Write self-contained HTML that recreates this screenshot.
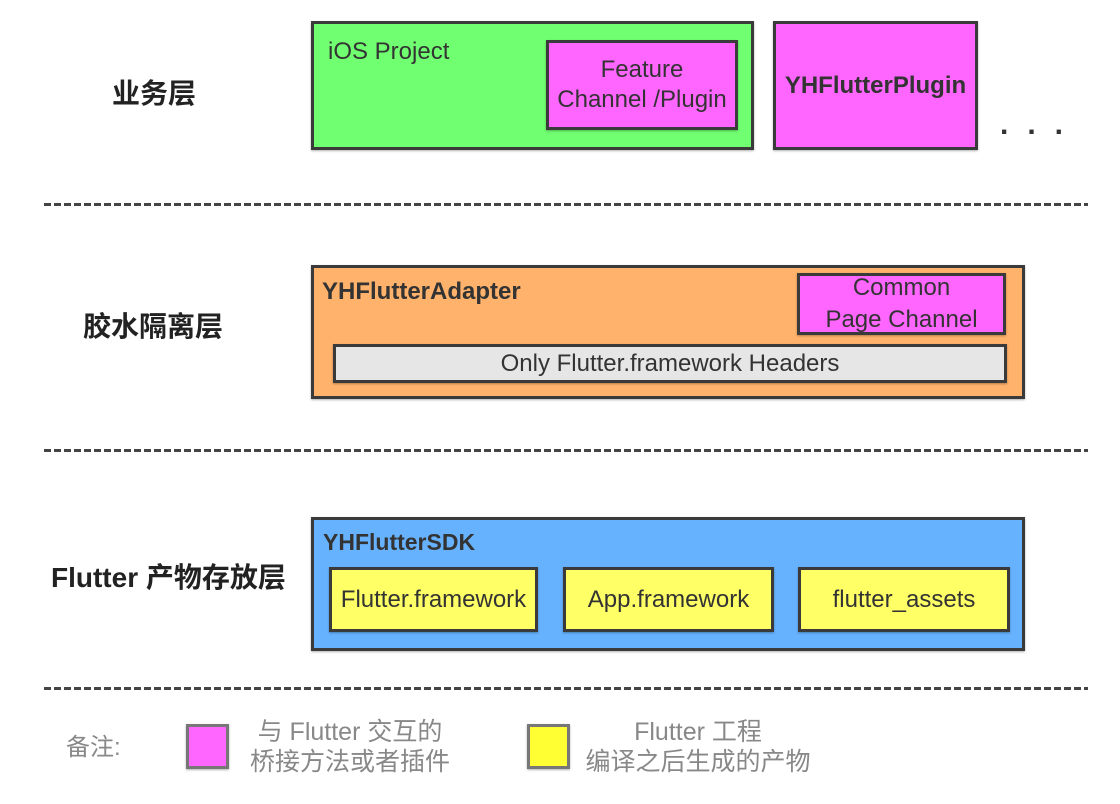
<!DOCTYPE html><html><head><meta charset="utf-8"><style>
body{margin:0;width:1120px;height:804px;background:#fff;position:relative;overflow:hidden;font-family:"Liberation Sans","Noto Sans CJK SC",sans-serif;color:#333}
.b{position:absolute;box-sizing:border-box;border:3px solid #3a3a3a;box-shadow:0 1px 2px rgba(0,0,0,.3)}
.t{position:absolute;white-space:nowrap}
.d{position:absolute;left:44px;width:1044px;height:3px;background:repeating-linear-gradient(90deg,#444 0 7px,transparent 7px 10px)}
.c{display:flex;align-items:center;justify-content:center;text-align:center;font-size:24px;line-height:30px}
.lab{font-weight:bold;font-size:28px;color:#222}
</style></head><body>
<div class="t lab" style="left:112px;top:72px">业务层</div>
<div class="t lab" style="left:83px;top:305px">胶水隔离层</div>
<div class="t lab" style="left:51px;top:556px">Flutter 产物存放层</div>

<div class="b" style="left:311px;top:21px;width:443px;height:129px;background:#70ff70"></div>
<div class="t" style="left:328px;top:38px;font-size:24px">iOS Project</div>
<div class="b c" style="left:546px;top:40px;width:192px;height:90px;background:#ff66ff">Feature<br>Channel /Plugin</div>
<div class="b c" style="left:773px;top:21px;width:205px;height:129px;background:#ff66ff;font-weight:bold">YHFlutterPlugin</div>
<div class="t" style="left:1000px;top:108px;font-size:30px;font-weight:bold;letter-spacing:19px">...</div>

<div class="d" style="top:203px"></div>

<div class="b" style="left:311px;top:265px;width:714px;height:134px;background:#ffb26b"></div>
<div class="t" style="left:322px;top:278px;font-size:24px;font-weight:bold">YHFlutterAdapter</div>
<div class="b c" style="left:797px;top:273px;width:209px;height:62px;background:#ff66ff;line-height:32px">Common<br>Page Channel</div>
<div class="b c" style="left:333px;top:344px;width:674px;height:39px;background:#e6e6e6">Only Flutter.framework Headers</div>

<div class="d" style="top:449px"></div>

<div class="b" style="left:311px;top:517px;width:714px;height:134px;background:#66b2ff"></div>
<div class="t" style="left:323px;top:529px;font-size:23px;font-weight:bold">YHFlutterSDK</div>
<div class="b c" style="left:329px;top:567px;width:209px;height:65px;background:#ffff66">Flutter.framework</div>
<div class="b c" style="left:563px;top:567px;width:211px;height:65px;background:#ffff66">App.framework</div>
<div class="b c" style="left:798px;top:567px;width:212px;height:65px;background:#ffff66">flutter_assets</div>

<div class="d" style="top:687px"></div>

<div class="t" style="left:66px;top:727px;font-size:24px;color:#888">备注:</div>
<div class="b" style="left:186px;top:724px;width:43px;height:45px;background:#ff66ff;border-color:#777"></div>
<div class="t c" style="left:240px;top:717px;width:220px;color:#888;flex-direction:column;font-size:25px">与 Flutter 交互的<br>桥接方法或者插件</div>
<div class="b" style="left:527px;top:724px;width:43px;height:45px;background:#ffff33;border-color:#777"></div>
<div class="t c" style="left:578px;top:717px;width:240px;color:#888;flex-direction:column;font-size:25px">Flutter 工程<br>编译之后生成的产物</div>
</body></html>
